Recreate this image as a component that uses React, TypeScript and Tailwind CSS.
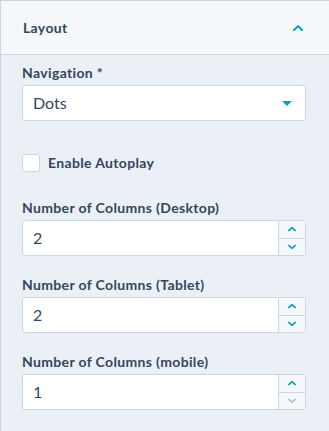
import React from "react";

const font = { fontFamily: "Lato, 'Noto Sans', sans-serif" };

function Up({ color = "#00a4bd" }: { color?: string }) {
  return (
    <svg width="10" height="6" viewBox="0 0 10 6" fill="none">
      <path d="M1 5 L5 1.2 L9 5" stroke={color} strokeWidth="2" strokeLinecap="square" />
    </svg>
  );
}
function Down({ color = "#00a4bd" }: { color?: string }) {
  return (
    <svg width="10" height="6" viewBox="0 0 10 6" fill="none">
      <path d="M1 1 L5 4.8 L9 1" stroke={color} strokeWidth="2" strokeLinecap="square" />
    </svg>
  );
}

function NumberField({ label, value, downDisabled }: { label: string; value: string; downDisabled?: boolean }) {
  return (
    <div className="flex flex-col">
      <div className="h-[20px] leading-[20px] text-[14px] font-bold tracking-[0.35px] text-[#33475b]">{label}</div>
      <div className="mt-[2px] flex h-[36px] rounded-[3px] border border-[#cbd6e2] bg-white">
        <div className="flex flex-1 items-center pl-[10px] text-[16px] text-[#33475b]">{value}</div>
        <div className="flex w-[27px] flex-col border-l border-[#cbd6e2] bg-[#f5f8fa]">
          <div className="flex flex-1 items-center justify-center border-b border-[#cbd6e2]">
            <span className="scale-[0.8] flex"><Up /></span>
          </div>
          <div className="flex flex-1 items-center justify-center">
            <span className="scale-[0.8] flex"><Down color={downDisabled ? "#b0c1d4" : "#00a4bd"} /></span>
          </div>
        </div>
      </div>
    </div>
  );
}

export default function App() {
  return (
    <div style={font} className="h-[431px] w-[329px] overflow-hidden border-l border-t border-[#cbd6e2] bg-[#eaf0f6]">
      <div className="flex h-[54px] items-center justify-between border-b border-[#cbd6e2] bg-[#f5f8fa] pl-[22px] pr-[26px]">
        <span className="text-[14px] font-bold tracking-[0.35px] text-[#33475b]">Layout</span>
        <Up />
      </div>
      <div className="flex flex-col pl-[21px] pr-[23px] pt-[8px]">
        <div className="h-[20px] leading-[20px] text-[14px] font-bold tracking-[0.35px] text-[#33475b]">Navigation *</div>
        <div className="mt-[2px] flex h-[36px] items-center justify-between rounded-[3px] border border-[#cbd6e2] bg-white pl-[10px] pr-[13px]">
          <span className="text-[16px] text-[#33475b]">Dots</span>
          <svg width="10" height="5" viewBox="0 0 10 5">
            <path d="M0 0 H10 L5 5 Z" fill="#00a4bd" />
          </svg>
        </div>
        <div className="mt-[31px] flex items-center gap-[8px]">
          <div className="h-[18px] w-[18px] rounded-[3px] border border-[#cbd6e2] bg-white" />
          <span className="text-[14px] font-bold tracking-[0.35px] text-[#33475b]">Enable Autoplay</span>
        </div>
        <div className="mt-[25px] flex flex-col gap-[19px]">
          <NumberField label="Number of Columns (Desktop)" value="2" />
          <NumberField label="Number of Columns (Tablet)" value="2" />
          <NumberField label="Number of Columns (mobile)" value="1" downDisabled />
        </div>
      </div>
    </div>
  );
}
